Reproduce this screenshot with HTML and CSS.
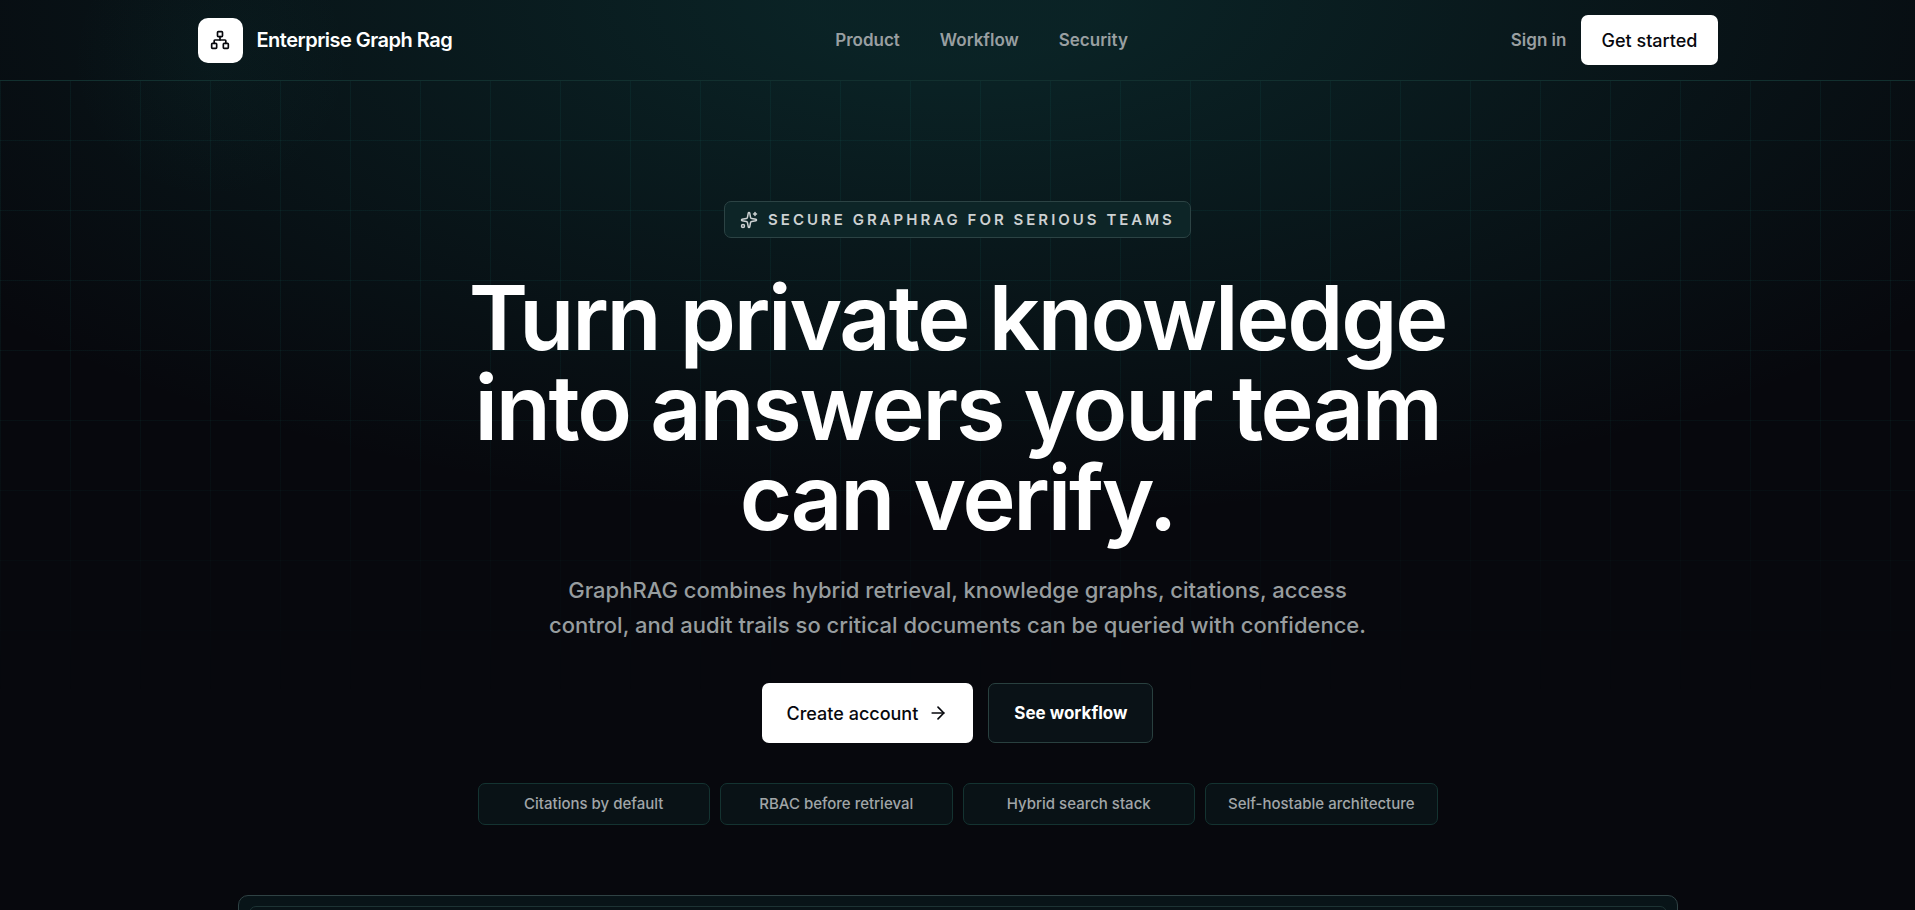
FILE: index.html
```html
<!DOCTYPE html>
<html lang="en">
	<head>
		<meta charset="utf-8">
		<meta name="viewport" content="width=device-width, initial-scale=1">
		<title>Enterprise Graph Rag</title>
		<link rel="stylesheet" href="styles.css">
	</head>
	<body>
		<header class="header">
			<div class="container header-inner">
				<a class="brand" href="#">
					<span class="brand-logo">
						<svg class="icon" viewBox="0 0 24 24" aria-hidden="true">
							<rect x="16" y="16" width="6" height="6" rx="1"/>
							<rect x="2" y="16" width="6" height="6" rx="1"/>
							<rect x="9" y="2" width="6" height="6" rx="1"/>
							<path d="M5 16v-3a1 1 0 0 1 1-1h12a1 1 0 0 1 1 1v3"/>
							<path d="M12 12V8"/>
						</svg>
					</span>
					<span class="brand-name">Enterprise Graph Rag</span>
				</a>
				<nav class="nav">
					<a href="#product">Product</a>
					<a href="#workflow">Workflow</a>
					<a href="#security">Security</a>
				</nav>
				<div class="account">
					<a class="sign-in" href="#">Sign in</a>
					<a class="btn btn-light btn-small" href="#">Get started</a>
				</div>
			</div>
		</header>
		<main class="main">
			<section class="hero">
				<p class="badge">
					<svg class="icon icon-small" viewBox="0 0 24 24" aria-hidden="true">
						<path d="M11.017 2.814a1 1 0 0 1 1.966 0l1.051 5.558a2 2 0 0 0 1.594 1.594l5.558 1.051a1 1 0 0 1 0 1.966l-5.558 1.051a2 2 0 0 0-1.594 1.594l-1.051 5.558a1 1 0 0 1-1.966 0l-1.051-5.558a2 2 0 0 0-1.594-1.594l-5.558-1.051a1 1 0 0 1 0-1.966l5.558-1.051a2 2 0 0 0 1.594-1.594z"/>
						<path d="M20 2v4"/>
						<path d="M22 4h-4"/>
						<circle cx="4" cy="20" r="2"/>
					</svg>
					Secure GraphRAG for serious teams
				</p>
				<h1 class="title">Turn private knowledge into answers your team can verify.</h1>
				<p class="lead">GraphRAG combines hybrid retrieval, knowledge graphs, citations, access control, and audit trails so critical documents can be queried with confidence.</p>
				<div class="actions">
					<a class="btn btn-light" href="#">
						Create account
						<svg class="icon" viewBox="0 0 24 24" aria-hidden="true">
							<path d="M5 12h14"/>
							<path d="m12 5 7 7-7 7"/>
						</svg>
					</a>
					<a class="btn btn-dark" href="#workflow">See workflow</a>
				</div>
				<ul class="points">
					<li>Citations by default</li>
					<li>RBAC before retrieval</li>
					<li>Hybrid search stack</li>
					<li>Self-hostable architecture</li>
				</ul>
			</section>
			<section class="preview" id="product">
				<div class="preview-inner"></div>
			</section>
		</main>
	</body>
</html>
```
FILE: styles.css
```css
*{
	margin: 0;
	padding: 0;
	box-sizing: border-box;
}
html{
	background-color: #07080d;
}
body{
	position: relative;
	height: 100vh;
	overflow: hidden;
	font-family: Inter, "Liberation Sans", sans-serif;
	color: #fff;
	background: radial-gradient(circle 140px at 11% 60px, rgba(24, 158, 142, 0.04), transparent),
		radial-gradient(ellipse 64% 520px at 50% 0, rgba(24, 150, 142, 0.19) 12%, transparent);
}
/* grid lines, fading out towards the bottom */
body::before{
	content: "";
	position: absolute;
	z-index: -1;
	top: 81px;
	left: 0;
	right: 0;
	height: 620px;
	background-image: linear-gradient(to right, rgba(45, 212, 191, 0.06) 1px, transparent 1px),
		linear-gradient(to bottom, rgba(45, 212, 191, 0.06) 1px, transparent 1px);
	background-size: 70px 70px;
	background-position: 0 59px;
	-webkit-mask-image: linear-gradient(to bottom, #000 40%, transparent);
	mask-image: linear-gradient(to bottom, #000 40%, transparent);
}
a{
	color: inherit;
	text-decoration: none;
}
ul{
	list-style: none;
}
.icon{
	width: 20px;
	height: 20px;
	fill: none;
	stroke: currentColor;
	stroke-width: 2;
	stroke-linecap: round;
	stroke-linejoin: round;
	flex: none;
}
.icon-small{
	width: 18px;
	height: 18px;
}
.container{
	max-width: 1600px;
	margin: 0 auto;
	padding: 0 40px;
}
.header{
	border-bottom: 1px solid #12302f;
}
.header-inner{
	display: flex;
	align-items: center;
	justify-content: space-between;
	height: 80px;
}
.brand{
	display: flex;
	align-items: center;
	gap: 14px;
}
.brand-logo{
	display: flex;
	align-items: center;
	justify-content: center;
	width: 45px;
	height: 45px;
	border-radius: 10px;
	background-color: #fff;
	color: #07080d;
}
.brand-name{
	font-size: 20px;
	font-weight: 600;
	letter-spacing: -0.025em;
}
.nav{
	display: flex;
	gap: 40px;
	font-size: 17px;
	font-weight: 600;
	color: #999fa1;
}
.account{
	display: flex;
	align-items: center;
	gap: 15px;
	font-size: 17px;
	font-weight: 600;
}
.sign-in{
	color: #999fa1;
}
.btn{
	display: flex;
	align-items: center;
	gap: 10px;
	height: 60px;
	padding: 0 25px;
	border-radius: 7px;
	font-size: 18px;
	font-weight: 500;
}
.btn-small{
	height: 50px;
	padding: 0 20px;
}
.btn-light{
	background-color: #fff;
	color: #07080d;
}
.btn-dark{
	border: 1px solid #29403f;
	background-color: #0a1217;
	font-size: 17px;
	font-weight: 700;
}
.main{
	padding: 120px 40px 0;
}
.hero{
	display: flex;
	flex-direction: column;
	align-items: center;
	text-align: center;
}
.badge{
	display: flex;
	align-items: center;
	gap: 10px;
	height: 37px;
	padding: 0 15px;
	border: 1px solid #2c4344;
	border-radius: 7px;
	background-color: #0d2527;
	color: #cdd1d2;
	font-size: 15px;
	font-weight: 600;
	letter-spacing: 0.2em;
	text-transform: uppercase;
}
.title{
	max-width: 1120px;
	margin-top: 35px;
	font-size: 90px;
	font-weight: 600;
	line-height: 90px;
	letter-spacing: -0.025em;
}
.lead{
	max-width: 840px;
	margin-top: 30px;
	font-size: 22px;
	font-weight: 500;
	line-height: 35px;
	color: #979d9f;
}
.actions{
	display: flex;
	gap: 15px;
	margin-top: 40px;
}
.points{
	display: grid;
	grid-template-columns: repeat(4, 1fr);
	gap: 10px;
	width: 100%;
	max-width: 960px;
	margin-top: 40px;
}
.points li{
	padding: 10px;
	border: 1px solid #143331;
	border-radius: 7px;
	background-color: #091216;
	color: #a1a6a8;
	font-size: 15px;
	font-weight: 500;
	line-height: 20px;
}
.preview{
	max-width: 1440px;
	height: 600px;
	margin: 70px auto 0;
	padding: 10px;
	border: 1px solid #2f4244;
	border-radius: 10px;
	background-color: #081418;
}
.preview-inner{
	height: 100%;
	border: 1px solid #1d3334;
	border-radius: 7px;
	background-color: #081418;
}
```
